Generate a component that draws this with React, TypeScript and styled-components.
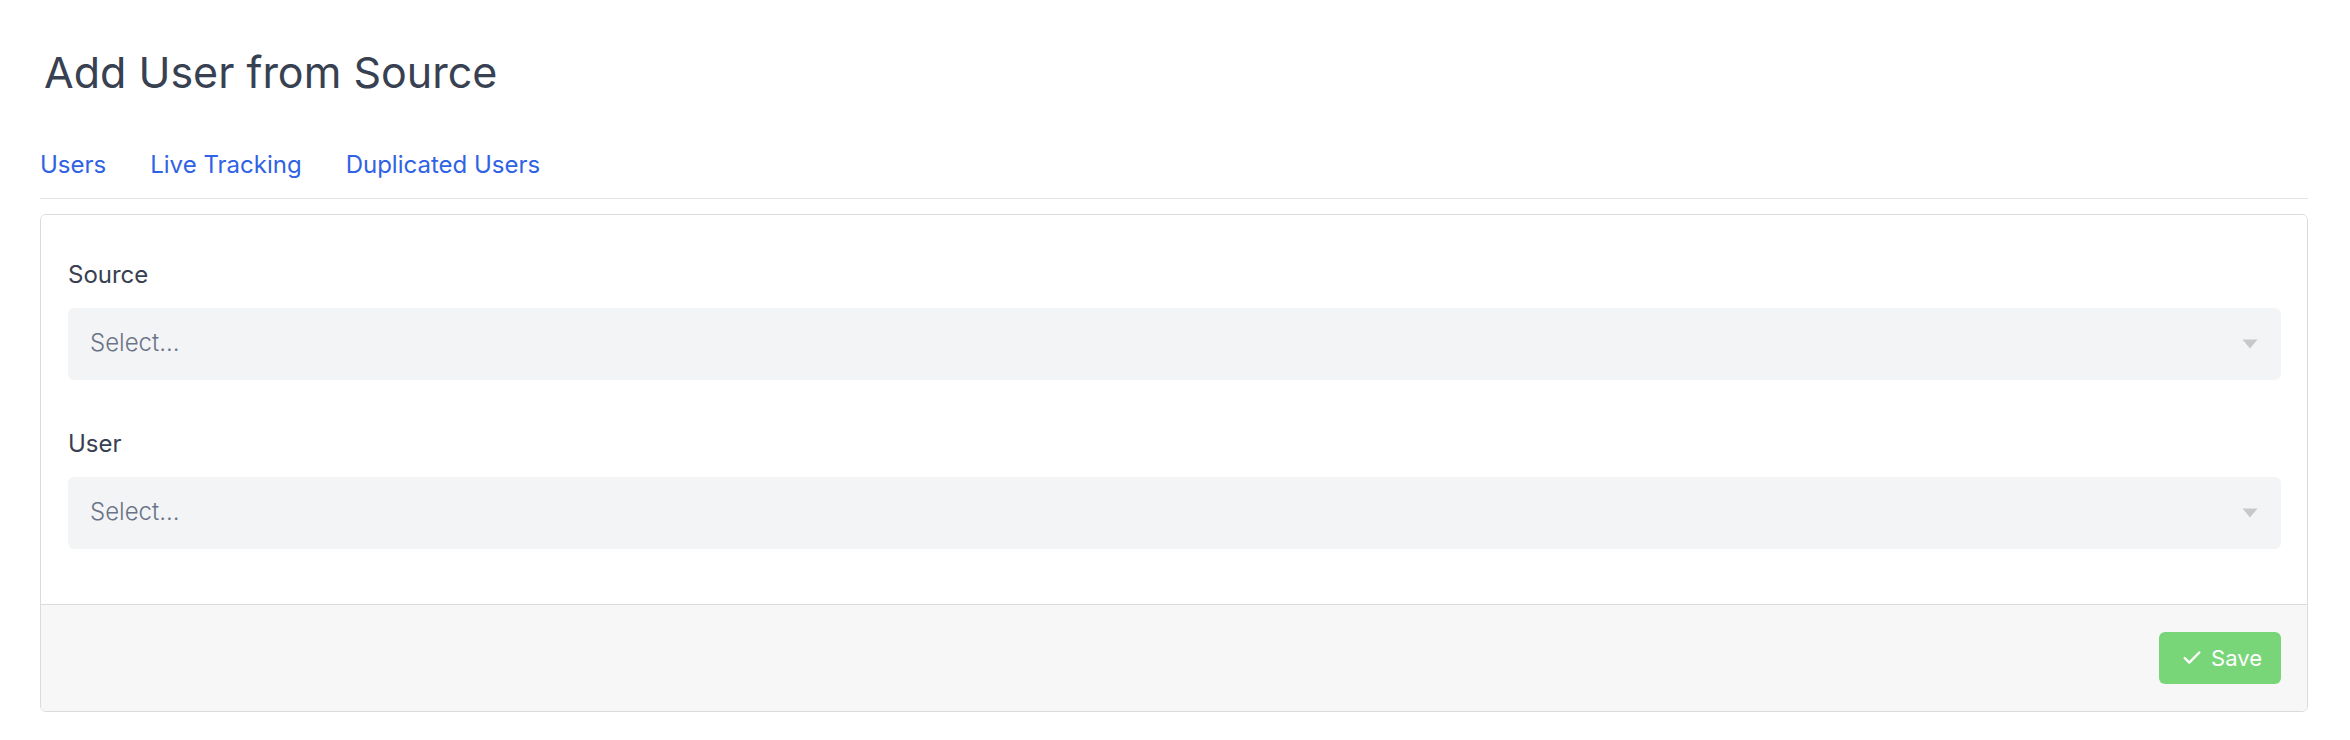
import React from 'react';
import styled, { createGlobalStyle } from 'styled-components';
import { Check } from 'lucide-react';

const GlobalStyle = createGlobalStyle`
  html, body {
    margin: 0;
    padding: 0;
    background: #ffffff;
    font-family: Inter, 'Noto Sans', 'Liberation Sans', sans-serif;
  }
  * {
    box-sizing: border-box;
  }
`;

const tabs = ['Users', 'Live Tracking', 'Duplicated Users'];
const fields = ['Source', 'User'];

const SelectBox = ({ placeholder }: { placeholder: string }) => (
  <SelectStyled>
    <Placeholder>{placeholder}</Placeholder>
    <Caret width="16" height="10" viewBox="0 0 16 10">
      <path d="M0.5 0.5 H15.5 L8 9.5 Z" fill="#c8c8c8" />
    </Caret>
  </SelectStyled>
);

const App = () => {
  return (
    <>
      <GlobalStyle />
      <Page>
        <Title>Add User from Source</Title>
        <TabBar>
          {tabs.map((tab) => (
            <TabLink key={tab}>{tab}</TabLink>
          ))}
        </TabBar>
        <Card>
          <CardBody>
            {fields.map((field, i) => (
              <Field key={field} first={i === 0}>
                <Label>{field}</Label>
                <SelectBox placeholder="Select..." />
              </Field>
            ))}
          </CardBody>
          <CardFooter>
            <SaveButton>
              <Check size={22} strokeWidth={2.6} />
              <span>Save</span>
            </SaveButton>
          </CardFooter>
        </Card>
      </Page>
    </>
  );
};

const Page = styled.div`
  display: flex;
  flex-direction: column;
  padding: 45px 42px 0 40px;
  width: 100%;
`;

const Title = styled.h1`
  margin: 0;
  padding-left: 4px;
  font-size: 43px;
  line-height: 54px;
  font-weight: 400;
  color: #374151;
`;

const TabBar = styled.nav`
  display: flex;
  gap: 44px;
  margin-top: 50px;
  padding-bottom: 17px;
  border-bottom: 1px solid #e5e5e5;
`;

const TabLink = styled.a`
  font-size: 24px;
  line-height: 32px;
  color: #2f62e4;
  cursor: pointer;
`;

const Card = styled.div`
  display: flex;
  flex-direction: column;
  margin-top: 15px;
  border: 1px solid #dbdbdb;
  border-radius: 6px;
  overflow: hidden;
`;

const CardBody = styled.div`
  display: flex;
  flex-direction: column;
  padding: 44px 26px 55px 27px;
  background: #ffffff;
`;

const Field = styled.div<{ first?: boolean }>`
  display: flex;
  flex-direction: column;
  gap: 17px;
  margin-top: ${(p) => (p.first ? '0' : '48px')};
`;

const Label = styled.label`
  font-size: 24px;
  line-height: 32px;
  font-weight: 400;
  color: #374151;
`;

const SelectStyled = styled.div`
  display: flex;
  align-items: center;
  justify-content: space-between;
  height: 72px;
  padding: 0 23px 0 22px;
  background: #f3f4f6;
  border-radius: 6px;
`;

const Placeholder = styled.span`
  font-size: 24px;
  font-weight: 300;
  color: #6b7386;
  margin-top: -4px;
`;

const Caret = styled.svg`
  display: block;
`;

const CardFooter = styled.div`
  display: flex;
  justify-content: flex-end;
  padding: 27px 26px;
  background: #f7f7f7;
  border-top: 1px solid #dbdbdb;
`;

const SaveButton = styled.button`
  display: flex;
  align-items: center;
  gap: 8px;
  height: 52px;
  padding: 0 19px 0 22px;
  border: none;
  border-radius: 6px;
  background: #78d678;
  color: #ffffff;
  font-family: Inter, 'Noto Sans', 'Liberation Sans', sans-serif;
  font-size: 22px;
  cursor: pointer;
`;

export default App;
